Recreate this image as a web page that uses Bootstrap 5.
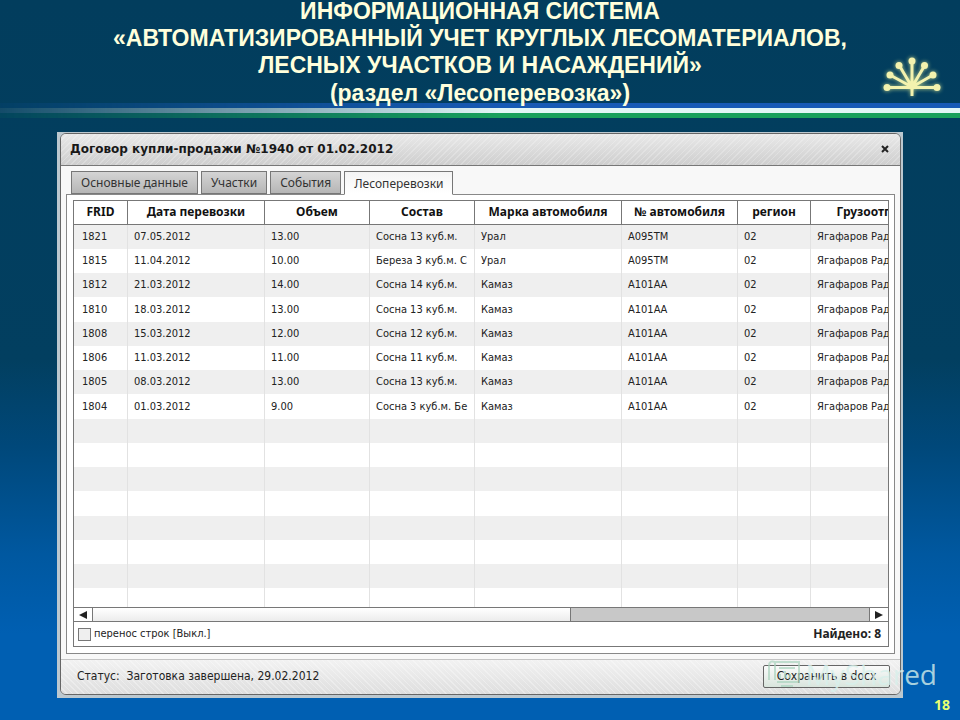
<!DOCTYPE html>
<html lang="ru">
<head>
<meta charset="utf-8">
<meta name="viewport" content="width=device-width, initial-scale=1">
<title>Лесоперевозка</title>
<link href="https://cdn.jsdelivr.net/npm/bootstrap@5.3.0/dist/css/bootstrap.min.css" rel="stylesheet">
<style>
body { min-height: 100vh; font-family: "DejaVu Sans Condensed", "Noto Sans", sans-serif; font-size: 12px; line-height: 16px; color: #222;
  background: linear-gradient(#023d5d 0, #023f60 50%, #00487a 62%, #0058a0 77%, #005fb2 88%, #005fb2 100%); }
.slide-title { margin: 0; font: bold 23px/27px "Liberation Sans", Arial, sans-serif; color: #ffffdc; }
.slide-title span { display: block; }
.slide-title span:first-child { line-height: 22px; padding-bottom: 3px; }
.slide-title .subhead { padding-top: 1px; }
.slide-head { height: 103px; z-index: 1; }
.emblem { right: 15px; top: 54px; width: 66px; height: 50px; filter: drop-shadow(0 0 2px #b9cf8a); }
.flag { height: 15px; background: linear-gradient(#175ab5 0 5px, #e2f6f6 5px 10px, #18a05c 10px);
  -webkit-mask-image: linear-gradient(90deg, rgba(0,0,0,.08), #000 52%); mask-image: linear-gradient(90deg, rgba(0,0,0,.08), #000 52%); }
.stage { padding: 14px 57px 22px; }
.frame { background: #bcc8cf; padding: 1px 2px 3px 3px; }
.dialog { border: 1px solid #666; border-radius: 6px; background: #f8f8f8; overflow: hidden; }
.dialog-head { height: 32px; padding: 0 10px 2px 9px; border-bottom: 1px solid #777;
  background: repeating-linear-gradient(135deg, rgba(255,255,255,.22) 0 1px, transparent 1px 4px), linear-gradient(#e9e9e9, #cecece); }
.dialog-head h2 { font: bold 12px/16px "DejaVu Sans", sans-serif; color: #181818; margin: 0; }
.close-btn { border: 0; background: none; padding: 0; width: 10px; height: 20px; line-height: 1; }
.dialog-main { padding: 5px; }
.tabs { gap: 3px; margin: 0 5px -1px; }
.tabs button { height: 23px; padding: 0 9px; border: 1px solid #777; color: #333; font: 12px/22px "Noto Sans", sans-serif; white-space: nowrap;
  background: linear-gradient(#d4d4d4, #b6b6b6); }
.tabs button.current { background: linear-gradient(#f4f4f4, #fff); border-bottom-color: #fff; height: 24px; line-height: 24px; }
.panel { border: 1px solid #888; background: #fff; padding: 5px 5px 6px 6px; }
.grid-box { border: 1px solid #777; }
.grid-view { height: 406px; overflow: hidden; }
.grid-table { table-layout: fixed; width: 902px; border-collapse: separate; border-spacing: 0; }
.grid-table th { height: 24px; padding: 0 0 2px; text-align: center; font: bold 12px/16px "Noto Sans", sans-serif; color: #111; border-right: 1px solid #777; border-bottom: 1px solid #777; white-space: nowrap; }
.grid-table td { height: 24px; padding: 0 0 0 6px; border-right: 1px solid #e2e2e2; overflow: hidden; white-space: nowrap; font-size: 11px; }
.grid-table tr:nth-child(4n) td { height: 25px; }
.grid-table td:first-child { padding-left: 8px; }
.grid-table tbody tr:nth-child(odd) td { background: #efefef; }
.scroller { height: 15px; border-top: 1px solid #777; border-bottom: 1px solid #777; background: #c8c8c8; }
.scroller button { width: 18px; border: 0; padding: 0; background: #fff; line-height: 0; }
.scroller .thumb { width: 61.6%; background: linear-gradient(#fff, #ececec); border: solid #777; border-width: 0 1px; }
.scroller .rail { border-right: 1px solid #777; }
.grid-foot { height: 24px; padding: 0 7px 0 4px; }
.grid-foot label { font-size: 11px; }
.grid-foot strong { font-family: "Noto Sans", sans-serif; }
.wrap-check { appearance: none; width: 13px; height: 13px; border: 1px solid #777; background: #efefef; margin: 0 3px 0 0; }
.dialog-foot { height: 35px; padding: 0 10px 2px 16px; border-top: 1px solid #c4c4c4; font-size: 12px; line-height: 16px;
  background: repeating-linear-gradient(45deg, rgba(255,255,255,.3) 0 1px, transparent 1px 4px), linear-gradient(#f2f2f2, #dedede); }
.save-btn { width: 127px; height: 23px; padding: 0; border: 1px solid #666; border-radius: 2px; font-size: 12px; line-height: 20px; color: #222; background: linear-gradient(#fafafa, #d9e5dd); }
.watermark { right: 23px; bottom: 26px; color: rgba(215,240,235,.78); font: 400 28px/40px "Open Sans", "Noto Sans", sans-serif; pointer-events: none; }
.page-no { right: 10px; bottom: 6px; font: bold 14px/18px "Noto Sans", sans-serif; color: #e9ff70; }
</style>
</head>
<body class="position-relative">
<header class="slide-head position-relative text-center">
  <h1 class="slide-title"><span>ИНФОРМАЦИОННАЯ СИСТЕМА</span><span>«АВТОМАТИЗИРОВАННЫЙ УЧЕТ КРУГЛЫХ ЛЕСОМАТЕРИАЛОВ,</span><span>ЛЕСНЫХ УЧАСТКОВ И НАСАЖДЕНИЙ»</span><span class="subhead">(раздел «Лесоперевозка»)</span></h1>
  <svg class="emblem position-absolute" viewBox="879 52 66 50" aria-hidden="true"><g stroke="#f3f2ae" stroke-width="3" fill="#f3f2ae"><path d="M887 85.500H937M912 94V59M912 85L899 63M912 85L925 63M912 85L890 73M912 85L933 73" fill="none"/><g stroke="none"><circle cx="887" cy="85.500" r="3.500"/><circle cx="890" cy="73" r="3.500"/><circle cx="899" cy="63.500" r="3.500"/><circle cx="912" cy="59" r="3.500"/><circle cx="924.500" cy="63.500" r="3.500"/><circle cx="933" cy="73" r="3.500"/><circle cx="937" cy="85.500" r="3.500"/><circle cx="912" cy="84" r="3.500"/></g></g></svg>
</header>
<div class="flag"></div>
<main class="stage">
  <div class="frame"><section class="dialog">
    <div class="dialog-head d-flex align-items-center justify-content-between"><h2>Договор купли-продажи №1940 от 01.02.2012</h2>
      <button class="close-btn" type="button" aria-label="Закрыть"><svg width="8" height="8" viewBox="0 0 8 8"><path d="M1 1L7 7M7 1L1 7" stroke="#222" stroke-width="2"/></svg></button></div>
    <div class="dialog-main">
      <div class="tabs d-flex align-items-start position-relative">
        <button type="button">Основные данные</button><button type="button">Участки</button><button type="button">События</button><button type="button" class="current">Лесоперевозки</button>
      </div>
      <div class="panel"><div class="grid-box">
        <div class="grid-view">
          <table class="grid-table">
            <colgroup><col style="width:54px"><col style="width:137px"><col style="width:105px"><col style="width:105px"><col style="width:147px"><col style="width:116px"><col style="width:73px"><col style="width:165px"></colgroup>
            <thead><tr><th>FRID</th><th>Дата перевозки</th><th>Объем</th><th>Состав</th><th>Марка автомобиля</th><th>№ автомобиля</th><th>регион</th><th>Грузоотправитель</th></tr></thead>
            <tbody>
              <tr><td>1821</td><td>07.05.2012</td><td>13.00</td><td>Сосна 13 куб.м.</td><td>Урал</td><td>А095ТМ</td><td>02</td><td>Ягафаров Радик</td></tr>
              <tr><td>1815</td><td>11.04.2012</td><td>10.00</td><td>Береза 3 куб.м. С</td><td>Урал</td><td>А095ТМ</td><td>02</td><td>Ягафаров Радик</td></tr>
              <tr><td>1812</td><td>21.03.2012</td><td>14.00</td><td>Сосна 14 куб.м.</td><td>Камаз</td><td>А101АА</td><td>02</td><td>Ягафаров Радик</td></tr>
              <tr><td>1810</td><td>18.03.2012</td><td>13.00</td><td>Сосна 13 куб.м.</td><td>Камаз</td><td>А101АА</td><td>02</td><td>Ягафаров Радик</td></tr>
              <tr><td>1808</td><td>15.03.2012</td><td>12.00</td><td>Сосна 12 куб.м.</td><td>Камаз</td><td>А101АА</td><td>02</td><td>Ягафаров Радик</td></tr>
              <tr><td>1806</td><td>11.03.2012</td><td>11.00</td><td>Сосна 11 куб.м.</td><td>Камаз</td><td>А101АА</td><td>02</td><td>Ягафаров Радик</td></tr>
              <tr><td>1805</td><td>08.03.2012</td><td>13.00</td><td>Сосна 13 куб.м.</td><td>Камаз</td><td>А101АА</td><td>02</td><td>Ягафаров Радик</td></tr>
              <tr><td>1804</td><td>01.03.2012</td><td>9.00</td><td>Сосна 3 куб.м. Бе</td><td>Камаз</td><td>А101АА</td><td>02</td><td>Ягафаров Радик</td></tr>
              <tr><td></td><td></td><td></td><td></td><td></td><td></td><td></td><td></td></tr>
              <tr><td></td><td></td><td></td><td></td><td></td><td></td><td></td><td></td></tr>
              <tr><td></td><td></td><td></td><td></td><td></td><td></td><td></td><td></td></tr>
              <tr><td></td><td></td><td></td><td></td><td></td><td></td><td></td><td></td></tr>
              <tr><td></td><td></td><td></td><td></td><td></td><td></td><td></td><td></td></tr>
              <tr><td></td><td></td><td></td><td></td><td></td><td></td><td></td><td></td></tr>
              <tr><td></td><td></td><td></td><td></td><td></td><td></td><td></td><td></td></tr>
              <tr><td></td><td></td><td></td><td></td><td></td><td></td><td></td><td></td></tr>
            </tbody>
          </table>
        </div>
        <div class="scroller d-flex">
          <button type="button" aria-label="Влево"><svg width="8" height="8" viewBox="0 0 8 8"><path d="M8 0V8L0 4Z" fill="#222"/></svg></button>
          <div class="rail flex-grow-1 d-flex"><div class="thumb"></div></div>
          <button type="button" aria-label="Вправо"><svg width="8" height="8" viewBox="0 0 8 8"><path d="M0 0V8L8 4Z" fill="#222"/></svg></button>
        </div>
        <div class="grid-foot d-flex align-items-center justify-content-between">
          <div class="d-flex align-items-center"><input class="wrap-check" type="checkbox" id="wrap"><label for="wrap">перенос строк [Выкл.]</label></div>
          <strong>Найдено: 8</strong>
        </div>
      </div></div>
    </div>
    <div class="dialog-foot d-flex align-items-center justify-content-between"><span>Статус:&nbsp; Заготовка завершена, 29.02.2012</span><button class="save-btn" type="button">Сохранить в docx</button></div>
  </section></div>
</main>
<div class="watermark position-absolute d-flex align-items-center gap-1">
  <svg width="34" height="32" viewBox="0 0 34 32" fill="none" stroke="#a9d3bd" stroke-opacity=".7" stroke-width="2"><path d="M8 4H32V24H10M8 4V22M2 22V8Q2 2 8 4M12 10H28M14 28H26"/><path d="M13 20V16M18 20V13M23 20V16"/></svg>
  <span>MyShared</span>
</div>
<div class="page-no position-absolute">18</div>
<script src="https://cdn.jsdelivr.net/npm/bootstrap@5.3.0/dist/js/bootstrap.bundle.min.js"></script>
</body>
</html>
